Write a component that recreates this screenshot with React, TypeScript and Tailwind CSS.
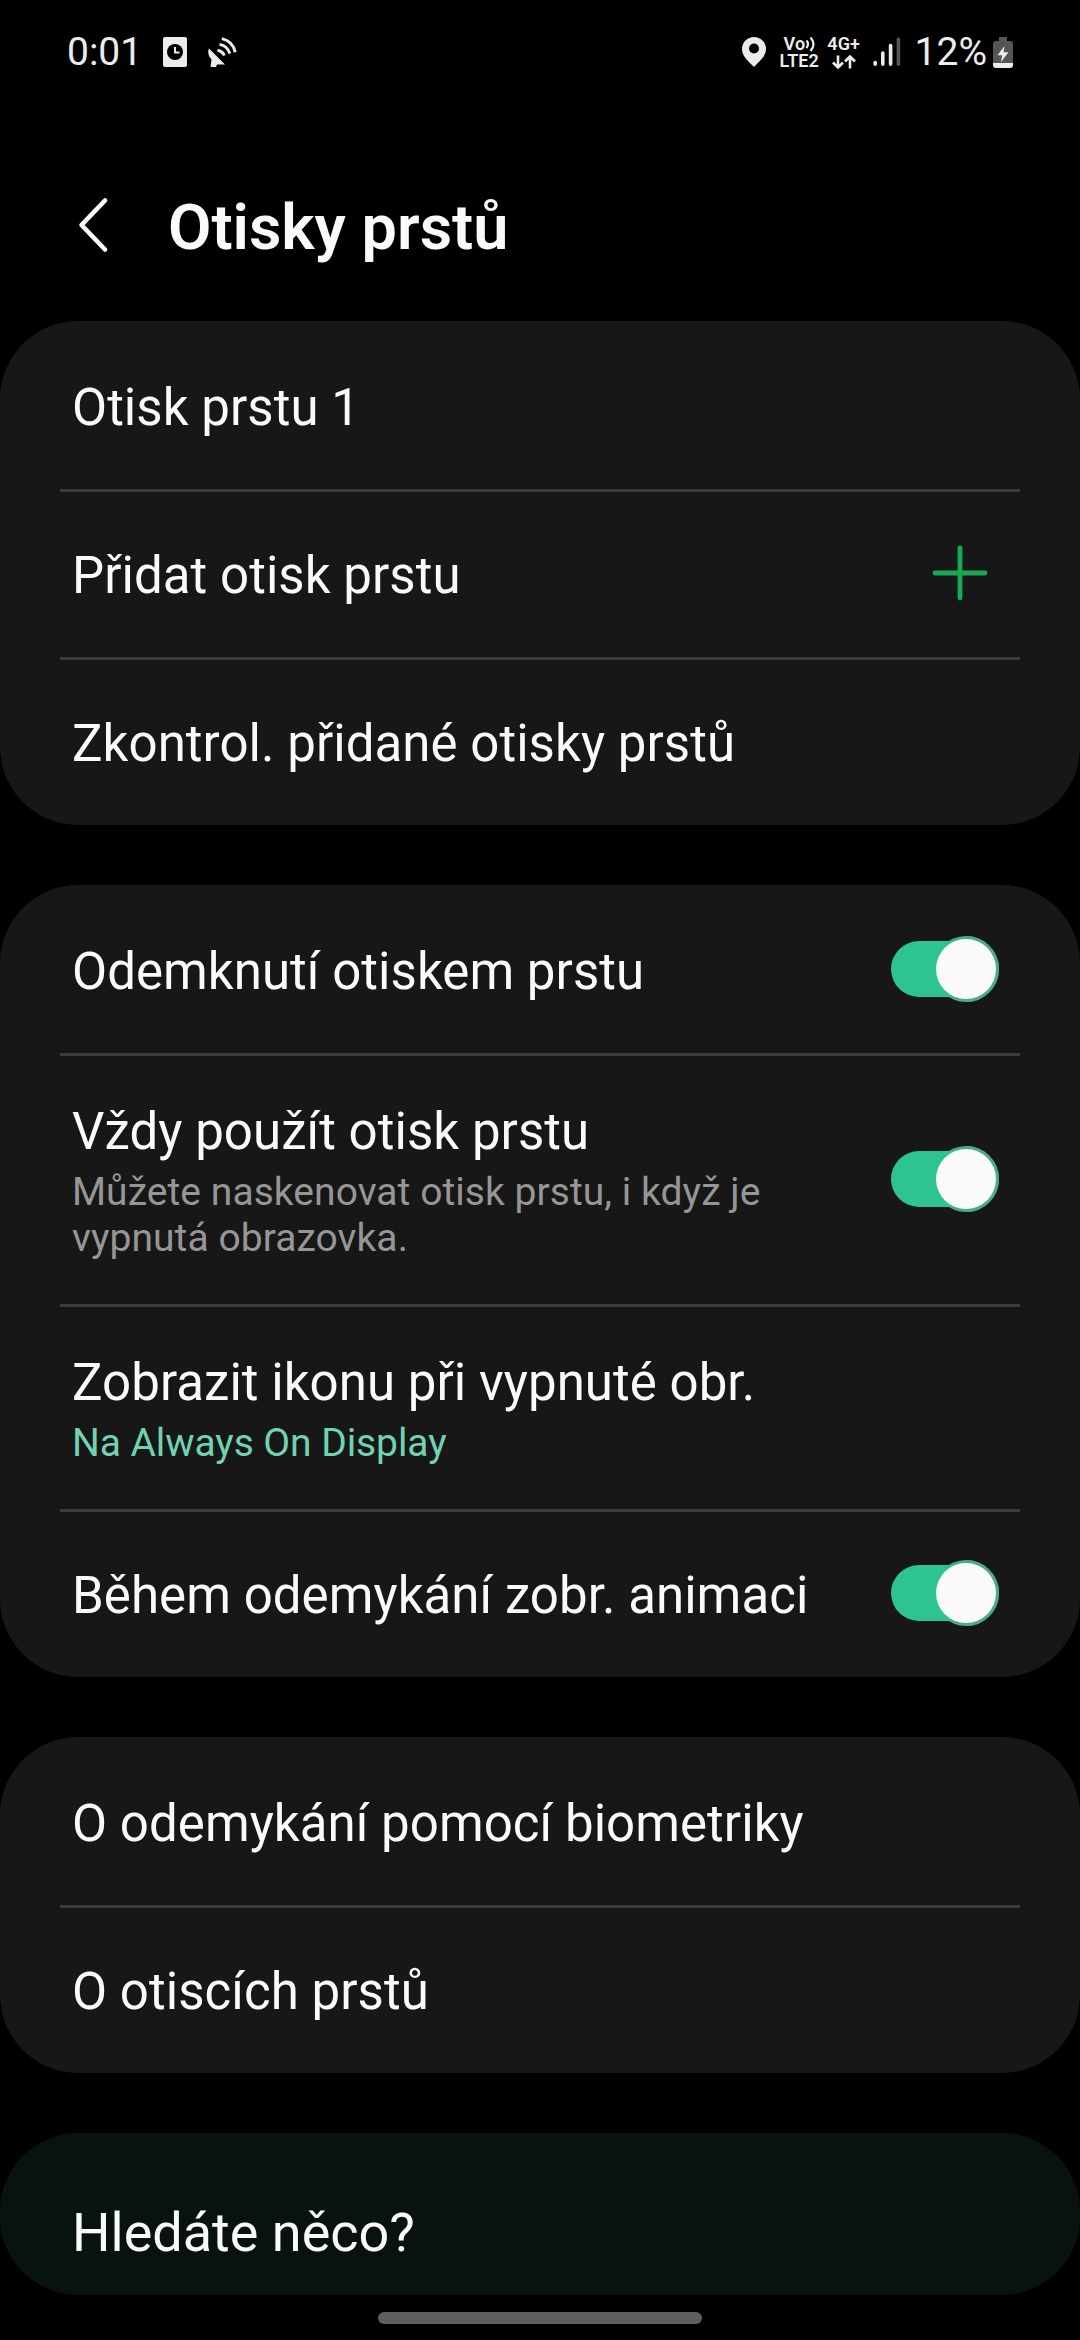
import { useState, type ReactNode } from 'react'

function ClockIcon() {
  return (
    <svg className="h-[30px] w-6" viewBox="0 0 24 30">
      <rect width="24" height="30" rx="2" fill="#ececec" />
      <circle cx="12" cy="15" r="8" fill="#000" />
      <path d="M12 10v5.5h4.5" fill="none" stroke="#ececec" strokeWidth="2" />
    </svg>
  )
}

function SatelliteIcon() {
  return (
    <svg className="h-[30px] w-[30px]" viewBox="0 0 30 30">
      <path d="M2 11.5L18 27.5H10L9 30H3.5L4.5 22.5Q-0.5 17 2 11.5Z" fill="#ececec" />
      <path d="M10.5 13.2Q15.5 14 17.3 18.5M12.5 7.4Q20.8 9 22.8 16.6M14.8 1.6Q25.8 4 28.2 15.2" fill="none" stroke="#ececec" strokeWidth="3" />
    </svg>
  )
}

function PinIcon() {
  return (
    <svg className="h-[30px] w-6" viewBox="0 0 24 30">
      <path fillRule="evenodd" d="M12 0a12 12 0 0 0-12 12c0 7 6 12 12 18 6-6 12-11 12-18A12 12 0 0 0 12 0zm0 6.5a5 5 0 1 1 0 10 5 5 0 0 1 0-10z" fill="#ececec" />
    </svg>
  )
}

function SignalIcon() {
  return (
    <svg className="h-[30px] w-7" viewBox="0 0 28 30" strokeWidth="3.6" strokeLinecap="round">
      <path d="M2.2 25.5v1.7M9.8 16v11.2M17.6 8.5v18.7" stroke="#ececec" />
      <path d="M25.4 2.3v24.9" stroke="#555" />
    </svg>
  )
}

function BatteryIcon() {
  return (
    <svg className="h-[31px] w-5" viewBox="0 0 20 31">
      <path d="M6 0h8v4h3a3 3 0 0 1 3 3v19H0V7a3 3 0 0 1 3-3h3z" fill="#555" />
      <path d="M0 26h20v2a3 3 0 0 1-3 3H3a3 3 0 0 1-3-3z" fill="#ececec" />
      <path d="M11.5 9L4.5 18.2h4.7L7.8 25.2L15.5 15.2h-5z" fill="#ececec" />
    </svg>
  )
}

function StatusBar() {
  return (
    <header className="flex h-[104px] items-center px-[67px] text-[39px] text-[#ececec]">
      <span className="w-24 leading-none">0:01</span>
      <ClockIcon />
      <span className="w-5" />
      <SatelliteIcon />
      <div className="ml-auto flex items-center">
        <PinIcon />
        <div className="ml-3.5 flex h-[33px] w-10 flex-col justify-between text-[18px] leading-4 font-semibold">
          <div className="flex pl-1">
            <span>Vo</span>
            <svg className="h-4 w-3 shrink-0" viewBox="0 0 12 16" fill="none" stroke="#ececec" strokeWidth="2.2">
              <path d="M1.5 4.5q3 3.5 0 7.5M5.5 1.5q6 6.5 0 13.5" />
            </svg>
          </div>
          <span>LTE2</span>
        </div>
        <div className="ml-[7px] flex h-[33px] w-[34px] flex-col items-center justify-between text-[18px] leading-4 font-semibold">
          <span>4G+</span>
          <svg className="h-3.5 w-6" viewBox="0 0 24 14" fill="none" stroke="#ececec" strokeWidth="2.6">
            <path d="M6 .5v11.5M1 7.5l5 5 5-5M18 13.5V2M13 6.5l5-5 5 5" />
          </svg>
        </div>
        <div className="ml-3">
          <SignalIcon />
        </div>
        <span className="ml-3.5 leading-none">12%</span>
        <div className="ml-1.5">
          <BatteryIcon />
        </div>
      </div>
    </header>
  )
}

function Toggle({ label, checked, onChange }: { label: string; checked: boolean; onChange: () => void }) {
  return (
    <button role="switch" aria-checked={checked} aria-label={label} onClick={onChange} className="mr-[21px] mb-[3px] block h-[66px] w-[108px] shrink-0">
      <svg viewBox="0 0 108 66" className={checked ? '' : '-scale-x-100 grayscale'}>
        <circle cx="75" cy="33" r="33" fill="#4aab86" />
        <rect y="5" width="104" height="56" rx="28" fill="#2dc492" />
        <circle cx="75" cy="33" r="31.5" fill="none" stroke="#4aab86" strokeWidth="3" strokeDasharray="99 99" strokeDashoffset="50" />
        <circle cx="75" cy="33" r="30" fill="#fafafa" />
      </svg>
    </button>
  )
}

function Card({ children }: { children: ReactNode }) {
  return <section className="mb-[60px] rounded-[78px] bg-[#181717]">{children}</section>
}

type RowProps = {
  title: string
  note?: string
  noteClass?: string
  first?: boolean
  children?: ReactNode
}

function Row({ title, note, noteClass = 'text-[#969696] tracking-[0.06px]', first, children }: RowProps) {
  return (
    <div className={`mx-[60px] flex items-center border-t-[3px] pl-3 ${first ? 'border-transparent' : 'border-[#3d3c3c]'}`}>
      <div className={`flex-1 ${note ? 'pt-[46px] pb-[43px]' : 'pt-[54px] pb-[51px]'}`}>
        <h2 className="text-[51px] leading-[60px] tracking-[0.05px] whitespace-nowrap">{title}</h2>
        {note && <p className={`mt-[7px] text-[39px] leading-[46px] whitespace-pre-line ${noteClass}`}>{note}</p>}
      </div>
      {children}
    </div>
  )
}

export default function App() {
  const [unlock, setUnlock] = useState(true)
  const [always, setAlways] = useState(true)
  const [animation, setAnimation] = useState(true)

  return (
    <div className="flex h-[2340px] w-[1080px] flex-col overflow-hidden bg-black font-['Roboto',sans-serif] text-[#fafafa]">
      <StatusBar />

      <div className="flex h-[217px] items-center pt-[25px] pl-[77px]">
        <button aria-label="Zpět">
          <svg className="h-[60px] w-8" viewBox="0 0 32 60" fill="none" stroke="#fafafa" strokeWidth="4.6" strokeLinecap="round" strokeLinejoin="round">
            <path d="M28 5.5L4.5 30 28 54.5" />
          </svg>
        </button>
        <h1 className="mt-1.5 ml-[59px] text-[63px] leading-[74px] font-semibold">Otisky prstů</h1>
      </div>

      <main>
        <Card>
          <Row title="Otisk prstu 1" first />
          <Row title="Přidat otisk prstu">
            <svg className="mr-8 mb-[3px] h-14 w-14" viewBox="0 0 56 56" stroke="#18a957" strokeWidth="4.8" strokeLinecap="round">
              <path d="M28 3v50M3 28h50" />
            </svg>
          </Row>
          <Row title="Zkontrol. přidané otisky prstů" />
        </Card>

        <Card>
          <Row title="Odemknutí otiskem prstu" first>
            <Toggle label="Odemknutí otiskem prstu" checked={unlock} onChange={() => setUnlock(!unlock)} />
          </Row>
          <Row title="Vždy použít otisk prstu" note={'Můžete naskenovat otisk prstu, i když je\nvypnutá obrazovka.'}>
            <Toggle label="Vždy použít otisk prstu" checked={always} onChange={() => setAlways(!always)} />
          </Row>
          <Row title="Zobrazit ikonu při vypnuté obr." note="Na Always On Display" noteClass="text-[#70d3b1] -tracking-[0.08px]" />
          <Row title="Během odemykání zobr. animaci">
            <Toggle label="Během odemykání zobr. animaci" checked={animation} onChange={() => setAnimation(!animation)} />
          </Row>
        </Card>

        <Card>
          <Row title="O odemykání pomocí biometriky" first />
          <Row title="O otiscích prstů" />
        </Card>

        <section className="h-[162px] rounded-[78px] bg-[#08130f] px-[72px] pt-[68px]">
          <h2 className="text-[54px] leading-[63px]">Hledáte něco?</h2>
        </section>
      </main>

      <div className="mt-[17px] h-3 w-[324px] self-center rounded-full bg-[#5e5e5e]" />
    </div>
  )
}
